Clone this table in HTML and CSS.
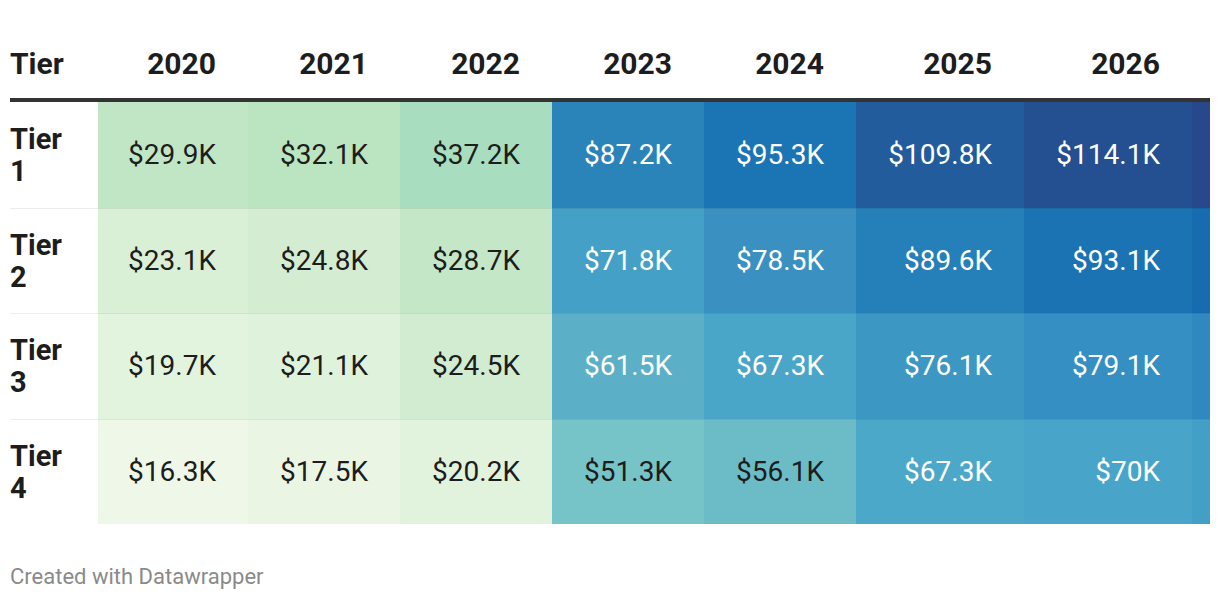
FILE: index.html
```html
<!DOCTYPE html>
<html lang="en">
<head>
<meta charset="utf-8">
<title>Tier salaries</title>
<link rel="stylesheet" href="styles.css">
</head>
<body>
<div class="chart">
  <div class="table">
    <div class="row head">
      <div class="hcell label">Tier</div>
      <div class="hcell">2020</div>
      <div class="hcell">2021</div>
      <div class="hcell">2022</div>
      <div class="hcell">2023</div>
      <div class="hcell">2024</div>
      <div class="hcell">2025</div>
      <div class="hcell">2026</div>
      <div class="hcell"></div>
    </div>
    <div class="row">
      <div class="cell label">Tier 1</div>
      <div class="cell r1c1">$29.9K</div>
      <div class="cell r1c2">$32.1K</div>
      <div class="cell r1c3">$37.2K</div>
      <div class="cell light r1c4">$87.2K</div>
      <div class="cell light r1c5">$95.3K</div>
      <div class="cell light r1c6">$109.8K</div>
      <div class="cell light r1c7">$114.1K</div>
      <div class="cell strip r1c8"></div>
    </div>
    <div class="row">
      <div class="cell label">Tier 2</div>
      <div class="cell r2c1">$23.1K</div>
      <div class="cell r2c2">$24.8K</div>
      <div class="cell r2c3">$28.7K</div>
      <div class="cell light r2c4">$71.8K</div>
      <div class="cell light r2c5">$78.5K</div>
      <div class="cell light r2c6">$89.6K</div>
      <div class="cell light r2c7">$93.1K</div>
      <div class="cell strip r2c8"></div>
    </div>
    <div class="row">
      <div class="cell label">Tier 3</div>
      <div class="cell r3c1">$19.7K</div>
      <div class="cell r3c2">$21.1K</div>
      <div class="cell r3c3">$24.5K</div>
      <div class="cell light r3c4">$61.5K</div>
      <div class="cell light r3c5">$67.3K</div>
      <div class="cell light r3c6">$76.1K</div>
      <div class="cell light r3c7">$79.1K</div>
      <div class="cell strip r3c8"></div>
    </div>
    <div class="row">
      <div class="cell label">Tier 4</div>
      <div class="cell r4c1">$16.3K</div>
      <div class="cell r4c2">$17.5K</div>
      <div class="cell r4c3">$20.2K</div>
      <div class="cell r4c4">$51.3K</div>
      <div class="cell r4c5">$56.1K</div>
      <div class="cell light r4c6">$67.3K</div>
      <div class="cell light r4c7">$70K</div>
      <div class="cell strip r4c8"></div>
    </div>
  </div>
  <div class="footer">Created with Datawrapper</div>
</div>
</body>
</html>
```

FILE: styles.css
```css
html, body {
  margin: 0;
  padding: 0;
  background: #ffffff;
}

body {
  font-family: Roboto, "Liberation Sans", Arial, sans-serif;
  color: #1d1d1d;
}

.chart {
  padding: 0 10px;
}

.table {
  width: 1200px;
  display: flex;
  flex-direction: column;
}

.row {
  display: grid;
  grid-template-columns: 88px 150px 152px 152px 152px 152px 168px 168px 18px;
  height: 105.5px;
}

.row.head {
  height: 98px;
  border-bottom: 4px solid #333333;
  align-items: end;
}

.hcell {
  font-size: 30px;
  font-weight: 700;
  line-height: 36px;
  padding-bottom: 16px;
  padding-right: 32px;
  text-align: right;
}

.hcell.label {
  text-align: left;
  padding-left: 0;
  padding-right: 0;
}

.cell {
  display: flex;
  align-items: center;
  justify-content: flex-end;
  padding-right: 32px;
  font-size: 28px;
  font-weight: 400;
  line-height: 32px;
  color: #1d1d1d;
}

.row + .row .cell {
  border-top: 1px solid rgba(0, 0, 0, 0.07);
}

.row.head + .row .cell {
  border-top: 0;
}

.cell.label {
  justify-content: flex-start;
  padding-left: 0;
  padding-right: 24px;
  font-size: 29px;
  font-weight: 700;
}

.cell.strip {
  padding-right: 0;
}

.cell.light {
  color: #ffffff;
}

.footer {
  margin-top: 40px;
  font-size: 22px;
  line-height: 26px;
  color: #8a8a8a;
}

/* row 1 */
.r1c1 { background: #c0e6c5; }
.r1c2 { background: #bbe4c0; }
.r1c3 { background: #a8ddbf; }
.r1c4 { background: #2a84ba; }
.r1c5 { background: #1b74b3; }
.r1c6 { background: #225c9c; }
.r1c7 { background: #244f90; }
.r1c8 { background: #27488a; }

/* row 2 */
.r2c1 { background: #d9efd6; }
.r2c2 { background: #d4edd2; }
.r2c3 { background: #c4e7c8; }
.r2c4 { background: #44a0c6; }
.r2c5 { background: #3a90c0; }
.r2c6 { background: #2580ba; }
.r2c7 { background: #1c73b3; }
.r2c8 { background: #176caf; }

/* row 3 */
.r3c1 { background: #e2f3de; }
.r3c2 { background: #dff2dc; }
.r3c3 { background: #d1ecd1; }
.r3c4 { background: #5bb0c8; }
.r3c5 { background: #4aa6c8; }
.r3c6 { background: #3d97c3; }
.r3c7 { background: #358fc2; }
.r3c8 { background: #2f88bf; }

/* row 4 */
.r4c1 { background: #eef7e8; }
.r4c2 { background: #eaf5e4; }
.r4c3 { background: #e1f2dd; }
.r4c4 { background: #77c4c8; }
.r4c5 { background: #6bbcc7; }
.r4c6 { background: #4ba8c9; }
.r4c7 { background: #48a5c9; }
.r4c8 { background: #42a0c7; }
```
